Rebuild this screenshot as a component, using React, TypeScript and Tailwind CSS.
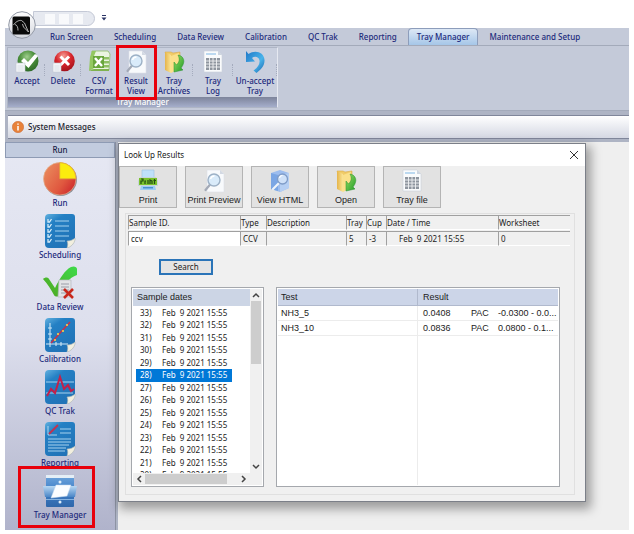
import React from 'react'

// ribbon + dialog icons -------------------------------

const AcceptIcon = () => (
  <svg viewBox="0 0 24 24" className="w-6 h-6" aria-hidden="true">
    <defs>
      <radialGradient id="acc" cx="45%" cy="30%" r="70%">
        <stop offset="0" stopColor="#9fce8d" />
        <stop offset="0.5" stopColor="#4b8f3c" />
        <stop offset="1" stopColor="#2f6b28" />
      </radialGradient>
    </defs>
    <circle cx="13" cy="11" r="10.5" fill="url(#acc)" />
    <path d="M6 11l3-3 4 4 7-8 3 2-9.5 12z" fill="#fff" />
    <rect x="1" y="13" width="9" height="9" fill="#f3f5f8" stroke="#c3c8d2" strokeWidth="0.6" />
    <path d="M2.5 16h6M2.5 18h6M2.5 20h6" stroke="#cfd4dd" strokeWidth="0.6" />
  </svg>
)

const DeleteIcon = () => (
  <svg viewBox="0 0 24 24" className="w-6 h-6" aria-hidden="true">
    <defs>
      <radialGradient id="del" cx="45%" cy="25%" r="75%">
        <stop offset="0" stopColor="#f59a92" />
        <stop offset="0.5" stopColor="#d8262c" />
        <stop offset="1" stopColor="#a3121c" />
      </radialGradient>
    </defs>
    <circle cx="13.5" cy="11" r="10.3" fill="url(#del)" />
    <path d="M9.5 6.5l8.5 8.5M18 6.5l-8.5 8.5" stroke="#fff" strokeWidth="3" />
    <rect x="2" y="13" width="8" height="9" fill="#f3f5f8" stroke="#c3c8d2" strokeWidth="0.6" />
    <path d="M3.5 16h5M3.5 18h5M3.5 20h5" stroke="#cfd4dd" strokeWidth="0.6" />
  </svg>
)

const CsvIcon = () => (
  <svg viewBox="0 0 24 24" className="w-6 h-6" aria-hidden="true">
    <path d="M5 1h16l2 3-1 16H5z" fill="#eaf4e0" stroke="#8dbb68" strokeWidth="0.8" />
    <path d="M5 1h4L7 6v12l-5 3 1-14z" fill="#94c860" />
    <path d="M6 6h11v12H6z" fill="#69a63c" />
    <path d="M8 8l7 8M15 8l-7 8" stroke="#fff" strokeWidth="2.4" />
    <path d="M17 7h5v2.5h-5zM17 11h5v2.5h-5zM17 15h5v2.5h-5z" fill="#8fc064" />
    <path d="M2 21l5-2h15v2H2z" fill="#7fb24f" />
  </svg>
)

const PreviewIcon = () => (
  <svg viewBox="0 0 24 24" className="w-6 h-6" aria-hidden="true">
    <path d="M5 1h13l4 4v18H5z" fill="#f8fafc" stroke="#dde1e8" strokeWidth="0.6" />
    <path d="M18 1v4h4z" fill="#d3d9e3" />
    <path d="M8.5 15l-5 6" stroke="#a3a9b6" strokeWidth="2.2" strokeLinecap="round" />
    <circle cx="12" cy="11" r="6" fill="#d9ebfa" stroke="#9db1c6" strokeWidth="1.4" />
    <path d="M8.5 10a4 4 0 0 1 4-3" stroke="#fff" strokeWidth="1.3" fill="none" />
  </svg>
)

const FolderIcon = () => (
  <svg viewBox="0 0 24 24" className="w-6 h-6" aria-hidden="true">
    <defs>
      <linearGradient id="fold" x1="0" x2="1">
        <stop offset="0" stopColor="#e5b44a" />
        <stop offset="1" stopColor="#fbe596" />
      </linearGradient>
      <linearGradient id="farr" x1="0" x2="1" y2="1">
        <stop offset="0" stopColor="#9be06a" />
        <stop offset="1" stopColor="#1f9a24" />
      </linearGradient>
    </defs>
    <path d="M3 2h6l2 1 7-1v17l-8 2z" fill="#f0cb68" stroke="#d4a13a" strokeWidth="0.5" />
    <path d="M3 2l6 3v18l-6-3z" fill="url(#fold)" />
    <path d="M9 6l8-3v16l-8 4z" fill="#fbe08a" />
    <path d="M16 5c6 1 8 7 3 13l2 2-9 2V12l2.5 3c3-3 3.5-6 1.5-10z" fill="url(#farr)" stroke="#25902a" strokeWidth="0.5" />
  </svg>
)

const TrayIcon = () => (
  <svg viewBox="0 0 24 24" className="w-6 h-6" aria-hidden="true">
    <path d="M3 1h14l4 4v17H3z" fill="#fafbfc" stroke="#c9d0da" strokeWidth="0.6" />
    <path d="M5 3h10v2H5z" fill="#bcd9f0" />
    <path d="M17 1v4h4z" fill="#cdd5e0" />
    <rect x="5" y="8" width="14" height="12" fill="#8e959e" />
    <path d="M5 11h14M5 14h14M5 17h14M8.5 8v12M12 8v12M15.5 8v12" stroke="#f0f2f4" strokeWidth="0.9" />
  </svg>
)

const UndoIcon = () => (
  <svg viewBox="0 0 24 24" className="w-6 h-6" aria-hidden="true">
    <defs>
      <linearGradient id="undo" x1="0" x2="1" y2="1">
        <stop offset="0" stopColor="#1f78c8" />
        <stop offset="0.6" stopColor="#49b3ea" />
        <stop offset="1" stopColor="#1a64ae" />
      </linearGradient>
    </defs>
    <path d="M3 1l2.5 3C12-.5 21 2 21.5 10c.3 6-4 10-8 13l-3-2.5c4-3 6.5-6 6-10-.6-4-5-4.500-7.5-2.5l3 3.500L3 12z" fill="url(#undo)" />
  </svg>
)

const PrinterIcon = () => (
  <svg viewBox="0 0 24 24" className="w-6 h-6" aria-hidden="true">
    <path d="M6 1h12v8H6z" fill="#bfe0fa" stroke="#9cc3e4" strokeWidth="0.6" />
    <path d="M4 8h16l2 4v5H2v-5z" fill="#c9d4d9" />
    <rect x="3" y="9" width="18" height="7" fill="#7ac22d" />
    <path d="M5 10h2v2H5v3M9 15v-3h1M12 11v4M14 15v-4l2 1v3M17.5 11.5h2.5M18.5 10v5" stroke="#234d12" strokeWidth="1.2" fill="none" />
    <path d="M5 17h14l1 4H4z" fill="#9ccdf4" />
    <path d="M7 18h10v1.5H7z" fill="#4c90d2" />
  </svg>
)

const HtmlIcon = () => (
  <svg viewBox="0 0 24 24" className="w-6 h-6" aria-hidden="true">
    <path d="M3 4l9-3 9 3v15l-9 4-9-3z" fill="#9dbdee" />
    <path d="M3 4l7 2v16l-7-2z" fill="#7ba6e4" />
    <path d="M12 6l9-2v15l-9 4z" fill="#b5cff3" />
    <path d="M11 14l-6 6" stroke="#eef3fa" strokeWidth="2.2" strokeLinecap="round" />
    <circle cx="14.5" cy="10" r="5" fill="#cfe1f8" stroke="#7f9cc7" strokeWidth="1.3" />
    <path d="M11.5 9a3 3 0 0 1 3-2.5" stroke="#fff" strokeWidth="1.2" fill="none" />
  </svg>
)

// sidebar icons -------------------------------

const Sheet = ({ children }: { children: React.ReactNode }) => (
  <svg viewBox="0 0 34 34" className="w-[34px] h-[34px]" aria-hidden="true">
    <defs>
      <linearGradient id="sheet" x1="0" x2="0.6" y2="1">
        <stop offset="0" stopColor="#62b1df" />
        <stop offset="0.3" stopColor="#2480c4" />
        <stop offset="1" stopColor="#2173b7" />
      </linearGradient>
    </defs>
    <path d="M6 0h23a3 3 0 0 1 3 3v22l-8 9H6a4 4 0 0 1-4-4V4a4 4 0 0 1 4-4z" fill="url(#sheet)" />
    {children}
    <path d="M24 34c1-3 1-5 0-7 3 0 6-1 8-3v2c-1 4-4 7-8 8z" fill="#f2efdf" stroke="#a9b3b5" strokeWidth="0.6" />
  </svg>
)

const RunIcon = () => (
  <svg viewBox="0 0 34 34" className="w-[34px] h-[34px]" aria-hidden="true">
    <defs>
      <linearGradient id="pie" x1="0" x2="1" y1="0.2" y2="0.9">
        <stop offset="0" stopColor="#ea8a5c" />
        <stop offset="0.6" stopColor="#e0583f" />
        <stop offset="1" stopColor="#c9202a" />
      </linearGradient>
    </defs>
    <circle cx="17.5" cy="17.5" r="16.5" fill="#8b8f98" />
    <circle cx="16.8" cy="16.8" r="16.3" fill="url(#pie)" stroke="#e3b18f" strokeWidth="0.7" />
    <path d="M16.8 16.8V.6a16.2 16.2 0 0 1 16.2 16.2z" fill="#fbec0e" stroke="#e0a83a" strokeWidth="0.7" />
  </svg>
)

const SchedulingIcon = () => (
  <Sheet>
    <path d="M12 7h14M12 12h14M12 17h14M12 22h14M12 27h10" stroke="#a5d2ee" strokeWidth="1" />
    <path d="M5 5v3h1.5l2-3M5 10v3h1.5l2-3M5 15v3h1.5l2-3M5 20v3h1.5l2-3M5 25v3h1.5l2-3" stroke="#d5ecf8" strokeWidth="1.3" fill="none" />
  </Sheet>
)

const ReviewIcon = () => (
  <svg viewBox="0 0 34 34" className="w-[34px] h-[34px]" aria-hidden="true">
    <defs>
      <linearGradient id="chk" x1="0" x2="1" y1="1" y2="0">
        <stop offset="0" stopColor="#4fa51e" />
        <stop offset="1" stopColor="#3edb4b" />
      </linearGradient>
    </defs>
    <path d="M0 13c2-2 5-2 6 0l6 9C17 12 22 4 28 1c3-1.5 6 0 6 2v6c-8 3-13 9-17 20-1 2-5 2-6 0C8 24 5 18 0 13z" fill="url(#chk)" />
    <path d="M16 14h12v17H15z" fill="#e2e3e6" stroke="#b5b8c0" strokeWidth="0.7" />
    <path d="M18 18h8M18 21h8M18 24h8M18 27h6" stroke="#9a9ea8" strokeWidth="1.2" />
    <path d="M21 23l9 9M30 23l-9 9" stroke="#c8281c" strokeWidth="2.6" />
  </svg>
)

const CalibrationIcon = () => (
  <Sheet>
    <path d="M7 5v24M3 26h22M5 10h4M5 16h4M5 21h4M13 24v4M18 24v4" stroke="#cfe8f6" strokeWidth="1.1" />
    <path d="M8 25L27 4" stroke="#c4324e" strokeWidth="1.6" />
    <g fill="#f3d548">
      <circle cx="12" cy="22" r="1.1" />
      <circle cx="15" cy="16" r="1.1" />
      <circle cx="20" cy="13" r="1.1" />
      <circle cx="24" cy="7" r="1.1" />
    </g>
  </Sheet>
)

const QcIcon = () => (
  <Sheet>
    <path d="M3 12h28M3 23h27" stroke="#a5d2ee" strokeWidth="1" />
    <path d="M4 26l4-7 4 4 5-16 4 12 4-4 3 6 3-2" stroke="#c3204a" strokeWidth="2" fill="none" />
  </Sheet>
)

const ReportingIcon = () => (
  <Sheet>
    <path d="M17 7h11M17 11h11M5 17h23M5 20h23M5 23h21M5 26h18M5 29h17" stroke="#a5d2ee" strokeWidth="1.2" />
    <path d="M5 4v9h9" stroke="#cfe8f6" strokeWidth="0.8" fill="none" />
    <path d="M6 12l9-9" stroke="#c4324e" strokeWidth="1.8" />
  </Sheet>
)

const CabinetIcon = () => (
  <svg viewBox="0 0 34 34" className="w-[34px] h-[34px]" aria-hidden="true">
    <defs>
      <linearGradient id="cab" x2="0" y2="1">
        <stop offset="0" stopColor="#6fa6dd" />
        <stop offset="0.5" stopColor="#3f7fc6" />
        <stop offset="1" stopColor="#2f67aa" />
      </linearGradient>
      <linearGradient id="drw" x2="0" y2="1">
        <stop offset="0" stopColor="#b9d8f3" />
        <stop offset="1" stopColor="#4a86c7" />
      </linearGradient>
    </defs>
    <rect x="3" y="1" width="28" height="32" rx="1" fill="url(#cab)" />
    <rect x="3" y="1" width="28" height="3" fill="#e4eef6" />
    <circle cx="17" cy="8" r="1.5" fill="#dcecf9" />
    <path d="M0 12h34l-2 11H2z" fill="url(#drw)" />
    <path d="M13 11h15l-4 11-16 2z" fill="#fbfdff" stroke="#c7dbef" strokeWidth="0.5" />
    <path d="M3 25h28v1H3z" fill="#86b3e0" />
    <circle cx="17" cy="28" r="1.5" fill="#dcecf9" />
  </svg>
)

const Logo = () => (
  <svg viewBox="0 0 28 28" className="absolute left-2 top-[11px] w-7 h-7 z-10" aria-hidden="true">
    <defs>
      <linearGradient id="orb" x2="0" y2="1">
        <stop offset="0" stopColor="#ffffff" />
        <stop offset="1" stopColor="#d4d7de" />
      </linearGradient>
    </defs>
    <circle cx="14" cy="14" r="13.3" fill="url(#orb)" stroke="#9298a5" strokeWidth="1" />
    <rect x="4.5" y="5.5" width="17.5" height="18" rx="1.5" fill="#0a0a0a" />
    <path d="M5.5 14c2-3 5-5 8-4.5l3 2.500 4 9-5-5-1-3M7 13.500c2 .5 3 2.500 3 6" stroke="#d8d8d8" strokeWidth="0.8" fill="none" />
  </svg>
)

const tabs = ['Run Screen', 'Scheduling', 'Data Review', 'Calibration', 'QC Trak', 'Reporting']

const ribbon = [
  { label: 'Accept', icon: <AcceptIcon />, width: 'w-9' },
  { label: 'Delete', icon: <DeleteIcon />, width: 'w-9' },
  { label: 'CSV Format', icon: <CsvIcon />, width: 'w-9' },
  { label: 'Result View', icon: <PreviewIcon />, width: 'w-[38px]', marked: true },
  { label: 'Tray Archives', icon: <FolderIcon />, width: 'w-[38px]' },
  { label: 'Tray Log', icon: <TrayIcon />, width: 'w-10' },
  { label: 'Un-accept Tray', icon: <UndoIcon />, width: 'w-11' },
]

const sections = [
  { label: 'Run', icon: <RunIcon /> },
  { label: 'Scheduling', icon: <SchedulingIcon /> },
  { label: 'Data Review', icon: <ReviewIcon /> },
  { label: 'Calibration', icon: <CalibrationIcon /> },
  { label: 'QC Trak', icon: <QcIcon /> },
  { label: 'Reporting', icon: <ReportingIcon /> },
  { label: 'Tray Manager', icon: <CabinetIcon />, marked: true },
]

const dialogTools = [
  { label: 'Print', icon: <PrinterIcon /> },
  { label: 'Print Preview', icon: <PreviewIcon /> },
  { label: 'View HTML', icon: <HtmlIcon /> },
  { label: 'Open', icon: <FolderIcon /> },
  { label: 'Tray file', icon: <TrayIcon /> },
]

const sampleNumbers = [33, 32, 31, 30, 29, 28, 27, 26, 25, 24, 23, 22, 21, 20]

const results = [
  { test: 'NH3_5', value: '0.0408', flag: 'PAC', range: '-0.0300 - 0.0...' },
  { test: 'NH3_10', value: '0.0836', flag: 'PAC', range: '0.0800 - 0.1...' },
]

const Ribbon = () => (
  <div className="border-y border-[#a3aaba] px-0.5 pt-px pb-0.5 bg-[#c4cad9]">
    <div className="w-fit border border-[#aeb5c5] border-r-[#e6e9f1] bg-[#c9cfde]">
      <div className="flex h-[49px] pt-0.5 pl-px">
        {ribbon.map((item) => (
          <button key={item.label} className={`relative flex flex-col items-center ${item.width}`}>
            {item.icon}
            <span className="pt-0.5 text-[8px] leading-[10px] font-medium text-[#1d2a7c]">
              {item.label.split(' ').map((word) => (
                <span key={word} className="block whitespace-nowrap">{word} </span>
              ))}
            </span>
            <span className="absolute right-0 top-3.5 h-3 border-r border-dotted border-[#a4abbd]" />
            {item.marked && <span className="absolute -left-px -top-[5px] z-10 w-[41px] h-[55px] border-3 border-[#e8000b]" />}
          </button>
        ))}
      </div>
      <div className="h-2.5 bg-gradient-to-b from-[#7d849b] to-[#a5aecb] text-center text-[8px] leading-[10px] font-medium text-white">
        Tray Manager
      </div>
    </div>
  </div>
)

const SideBar = () => (
  <nav className="w-[111px] shrink-0 flex flex-col bg-gradient-to-b from-[#e6e8f3] via-[#dddfed] to-[#b0b3cb] border-r border-[#8d93a3]">
    <div className="h-4 mb-1 border border-[#8e9bb4] bg-[#c2ccdf] text-center text-[8px] leading-[14px] font-medium text-[#1b2346]">Run</div>
    {sections.map((item) => (
      <button key={item.label} className="relative h-[52px] flex flex-col items-center text-[8px] leading-3 font-medium text-[#1d2a7c]">
        {item.icon}
        <span className="pt-px">{item.label}</span>
        {item.marked && <span className="absolute left-[13px] -top-2 w-[77px] h-[62px] border-3 border-[#e8000b]" />}
      </button>
    ))}
  </nav>
)

const head = 'h-[15px] border-t border-l border-b border-t-[#a0a0a0] border-l-[#a0a0a0] border-b-white font-normal text-left whitespace-nowrap'
const cell = 'h-[15px] border-t border-l border-b border-t-[#a0a0a0] border-l-[#a0a0a0] border-b-white pl-0.5 whitespace-nowrap'

const SampleForm = () => (
  <table className="w-full table-fixed border-separate border-spacing-x-0 border-spacing-y-px text-[8px] leading-3 text-[#222]">
    <colgroup>
      <col className="w-[112px]" />
      <col className="w-[26px]" />
      <col />
      <col className="w-5" />
      <col className="w-5" />
      <col className="w-28" />
      <col className="w-[72px]" />
    </colgroup>
    <thead>
      <tr>
        <th className={head}><label htmlFor="sample">Sample ID.</label></th>
        <th className={head}>Type</th>
        <th className={head}>Description</th>
        <th className={head}>Tray</th>
        <th className={head}>Cup</th>
        <th className={head}>Date / Time</th>
        <th className={head}>Worksheet</th>
      </tr>
    </thead>
    <tbody>
      <tr>
        <td className={`${cell} bg-white`}>
          <input id="sample" defaultValue="ccv" className="block w-full h-3 bg-white outline-none" />
        </td>
        <td className={cell}>CCV</td>
        <td className={cell}></td>
        <td className={cell}>5</td>
        <td className={cell}>-3</td>
        <td className={cell}><span className="pl-2.5 whitespace-pre">Feb  9 2021 15:55</span></td>
        <td className={cell}>0</td>
      </tr>
    </tbody>
  </table>
)

const Chevron = ({ d }: { d: string }) => (
  <svg viewBox="0 0 12 12" className="w-3 h-3 shrink-0" aria-hidden="true">
    <path d={d} stroke="#444" strokeWidth="1.5" fill="none" />
  </svg>
)

const SampleDates = () => (
  <div className="w-[133px] h-[200px] shrink-0 flex flex-col border border-[#a5a8ad] bg-white p-px">
    <div className="flex flex-1 min-h-0">
      <div className="flex-1 overflow-hidden">
        <div className="h-[17px] pl-1 bg-[#ccd5e5] font-['Liberation_Sans',Arial,sans-serif] text-[9px] leading-[17px] text-[#222]">Sample dates</div>
        <ul className="pt-px pl-[3px] pr-[18px] text-[8px] leading-3 text-[#222]">
          {sampleNumbers.map((n) => (
            <li key={n} className="h-3 even:h-[13px]">
              <button className={`flex w-full h-full pl-1 whitespace-pre ${n === 28 ? 'bg-[#0078d7] text-white' : ''}`}>
                <span className="w-[22px] text-left">{n})</span>
                <span>Feb  9 2021 15:55</span>
              </button>
            </li>
          ))}
        </ul>
      </div>
      <div className="w-3 flex flex-col bg-[#f0f0f0]">
        <Chevron d="M3 8l3-3 3 3" />
        <div className="h-[63px] mx-px bg-[#cdcdcd]" />
        <div className="flex-1" />
        <Chevron d="M3 4l3 3 3-3" />
      </div>
    </div>
    <div className="h-3 flex bg-[#f0f0f0]">
      <Chevron d="M8 3l-3 3 3 3" />
      <div className="w-[82px] my-px bg-[#cdcdcd]" />
      <div className="flex-1" />
      <Chevron d="M4 3l3 3-3 3" />
      <div className="w-3" />
    </div>
  </div>
)

const Results = () => (
  <div className="flex-1 h-[200px] flex flex-col border border-[#a5a8ad] bg-white p-px">
    <table className="w-full table-fixed border-separate border-spacing-0 font-['Liberation_Sans',Arial,sans-serif] text-[9px] leading-[14px] text-[#222]">
      <colgroup>
        <col />
        <col className="w-[53px]" />
        <col className="w-[27px]" />
        <col className="w-[60px]" />
      </colgroup>
      <thead className="bg-[#ccd5e8]">
        <tr>
          <th className="h-[17px] pl-[3px] border-b border-r border-[#b0b9cd] font-normal text-left">Test</th>
          <th className="pl-[5px] border-b border-[#b0b9cd] font-normal text-left" colSpan={3}>Result</th>
        </tr>
      </thead>
      <tbody>
        {results.map((row) => (
          <tr key={row.test}>
            <td className="h-[15px] pl-[3px] border-b border-r border-[#ececec]">{row.test}</td>
            <td className="pl-[5px] border-b border-[#ececec]">{row.value}</td>
            <td className="border-b border-[#ececec]">{row.flag}</td>
            <td className="border-b border-[#ececec] whitespace-nowrap">{row.range}</td>
          </tr>
        ))}
      </tbody>
    </table>
    <div className="flex-1 mr-[140px] border-r border-[#ececec]" />
  </div>
)

const LookUpDialog = () => (
  <section className="mt-px mr-[43px] border border-[#7b7f88] bg-[#f0f0f0] shadow-[3px_5px_10px_2px_rgba(0,0,0,0.35)]">
    <div className="h-[22px] flex items-center justify-between pl-[5px] pr-1.5 bg-white">
      <h1 className="text-[8px] text-[#222]">Look Up Results</h1>
      <button aria-label="Close">
        <svg viewBox="0 0 10 10" className="w-2.5 h-2.5" aria-hidden="true">
          <path d="M1 1l8 8M9 1l-8 8" stroke="#333" strokeWidth="1" />
        </svg>
      </button>
    </div>
    <div className="flex gap-2">
      {dialogTools.map((item) => (
        <button
          key={item.label}
          className="w-[58px] h-[42px] flex flex-col items-center pt-0.5 border border-[#b4b4b4] bg-[#e2e2e2] font-['Liberation_Sans',Arial,sans-serif] text-[9px] leading-3 text-[#222] whitespace-nowrap"
        >
          {item.icon}
          <span className="pt-px">{item.label}</span>
        </button>
      ))}
    </div>
    <div className="mt-[5px] ml-1.5 mr-2.5 mb-1.5 border border-[#e0e0e0] pl-0.5 pr-1">
      <SampleForm />
      <button className="mt-3 ml-[31px] w-[54px] h-4 border-2 border-[#2a74b8] bg-[#e4e4e4] flex items-center justify-center text-[8px] text-[#222]">Search</button>
      <div className="flex gap-3 mt-3 mb-[7px] pl-[3px] pr-2.5">
        <SampleDates />
        <Results />
      </div>
    </div>
  </section>
)

const App = () => {
  return (
    <div className="relative min-h-screen bg-white px-[5px] pb-1 flex flex-col font-['Noto_Sans','Open_Sans',sans-serif]">
      <Logo />
      <header className="h-7 flex items-start pt-[11px] pl-7">
        <div className="w-[62px] h-[15px] flex items-center justify-center gap-1 rounded-r-full border border-[#c4c9d6] bg-[#e6e9f0]">
          <span className="w-2.5 h-2.5 bg-[#f8f9fb]" />
          <span className="w-2.5 h-2.5 bg-[#f8f9fb]" />
          <span className="w-2.5 h-2.5 bg-[#f8f9fb]" />
        </div>
        <button aria-label="Customize" className="pl-1.5 pt-1">
          <svg viewBox="0 0 6 6" className="w-1.5 h-1.5" aria-hidden="true">
            <path d="M1 .5h4" stroke="#2c3566" strokeWidth="1" />
            <path d="M.5 2.5h5L3 5.5z" fill="#2c3566" />
          </svg>
        </button>
      </header>
      <nav className="h-[17px] flex items-center gap-[21px] pl-[45px] bg-[#c4cad9] text-[8px] leading-4 font-medium text-[#1d2a7c] whitespace-nowrap">
        {tabs.map((tab) => (
          <button key={tab}>{tab}</button>
        ))}
        <button className="-mx-2.5 h-full px-2 rounded-t-sm border border-b-0 border-[#8d9dbb] bg-gradient-to-b from-[#dde8f5] to-[#a5c6e8]">Tray Manager</button>
        <button>Maintenance and Setup</button>
      </nav>
      <Ribbon />
      <div className="bg-[#aeb4c4] pt-1 pb-[3px]">
        <div className="h-6 ml-[3px] flex items-center gap-1 pl-1 border-y border-[#80869a] bg-gradient-to-b from-white to-[#d5d8e3] text-[8px] font-medium text-[#1b1b2c]">
          <svg viewBox="0 0 12 12" className="w-3 h-3" aria-hidden="true">
            <circle cx="6" cy="6" r="5.7" fill="#e8823a" stroke="#c9622a" strokeWidth="0.5" />
            <path d="M6 2.5v1.3M6 5v4.5" stroke="#fff" strokeWidth="1.5" />
          </svg>
          System Messages
        </div>
      </div>
      <div className="flex-1 flex bg-[#aeb4c4]">
        <SideBar />
        <main className="flex-1 ml-0.5 bg-[#efefef]">
          <LookUpDialog />
        </main>
      </div>
    </div>
  )
}

export default App
